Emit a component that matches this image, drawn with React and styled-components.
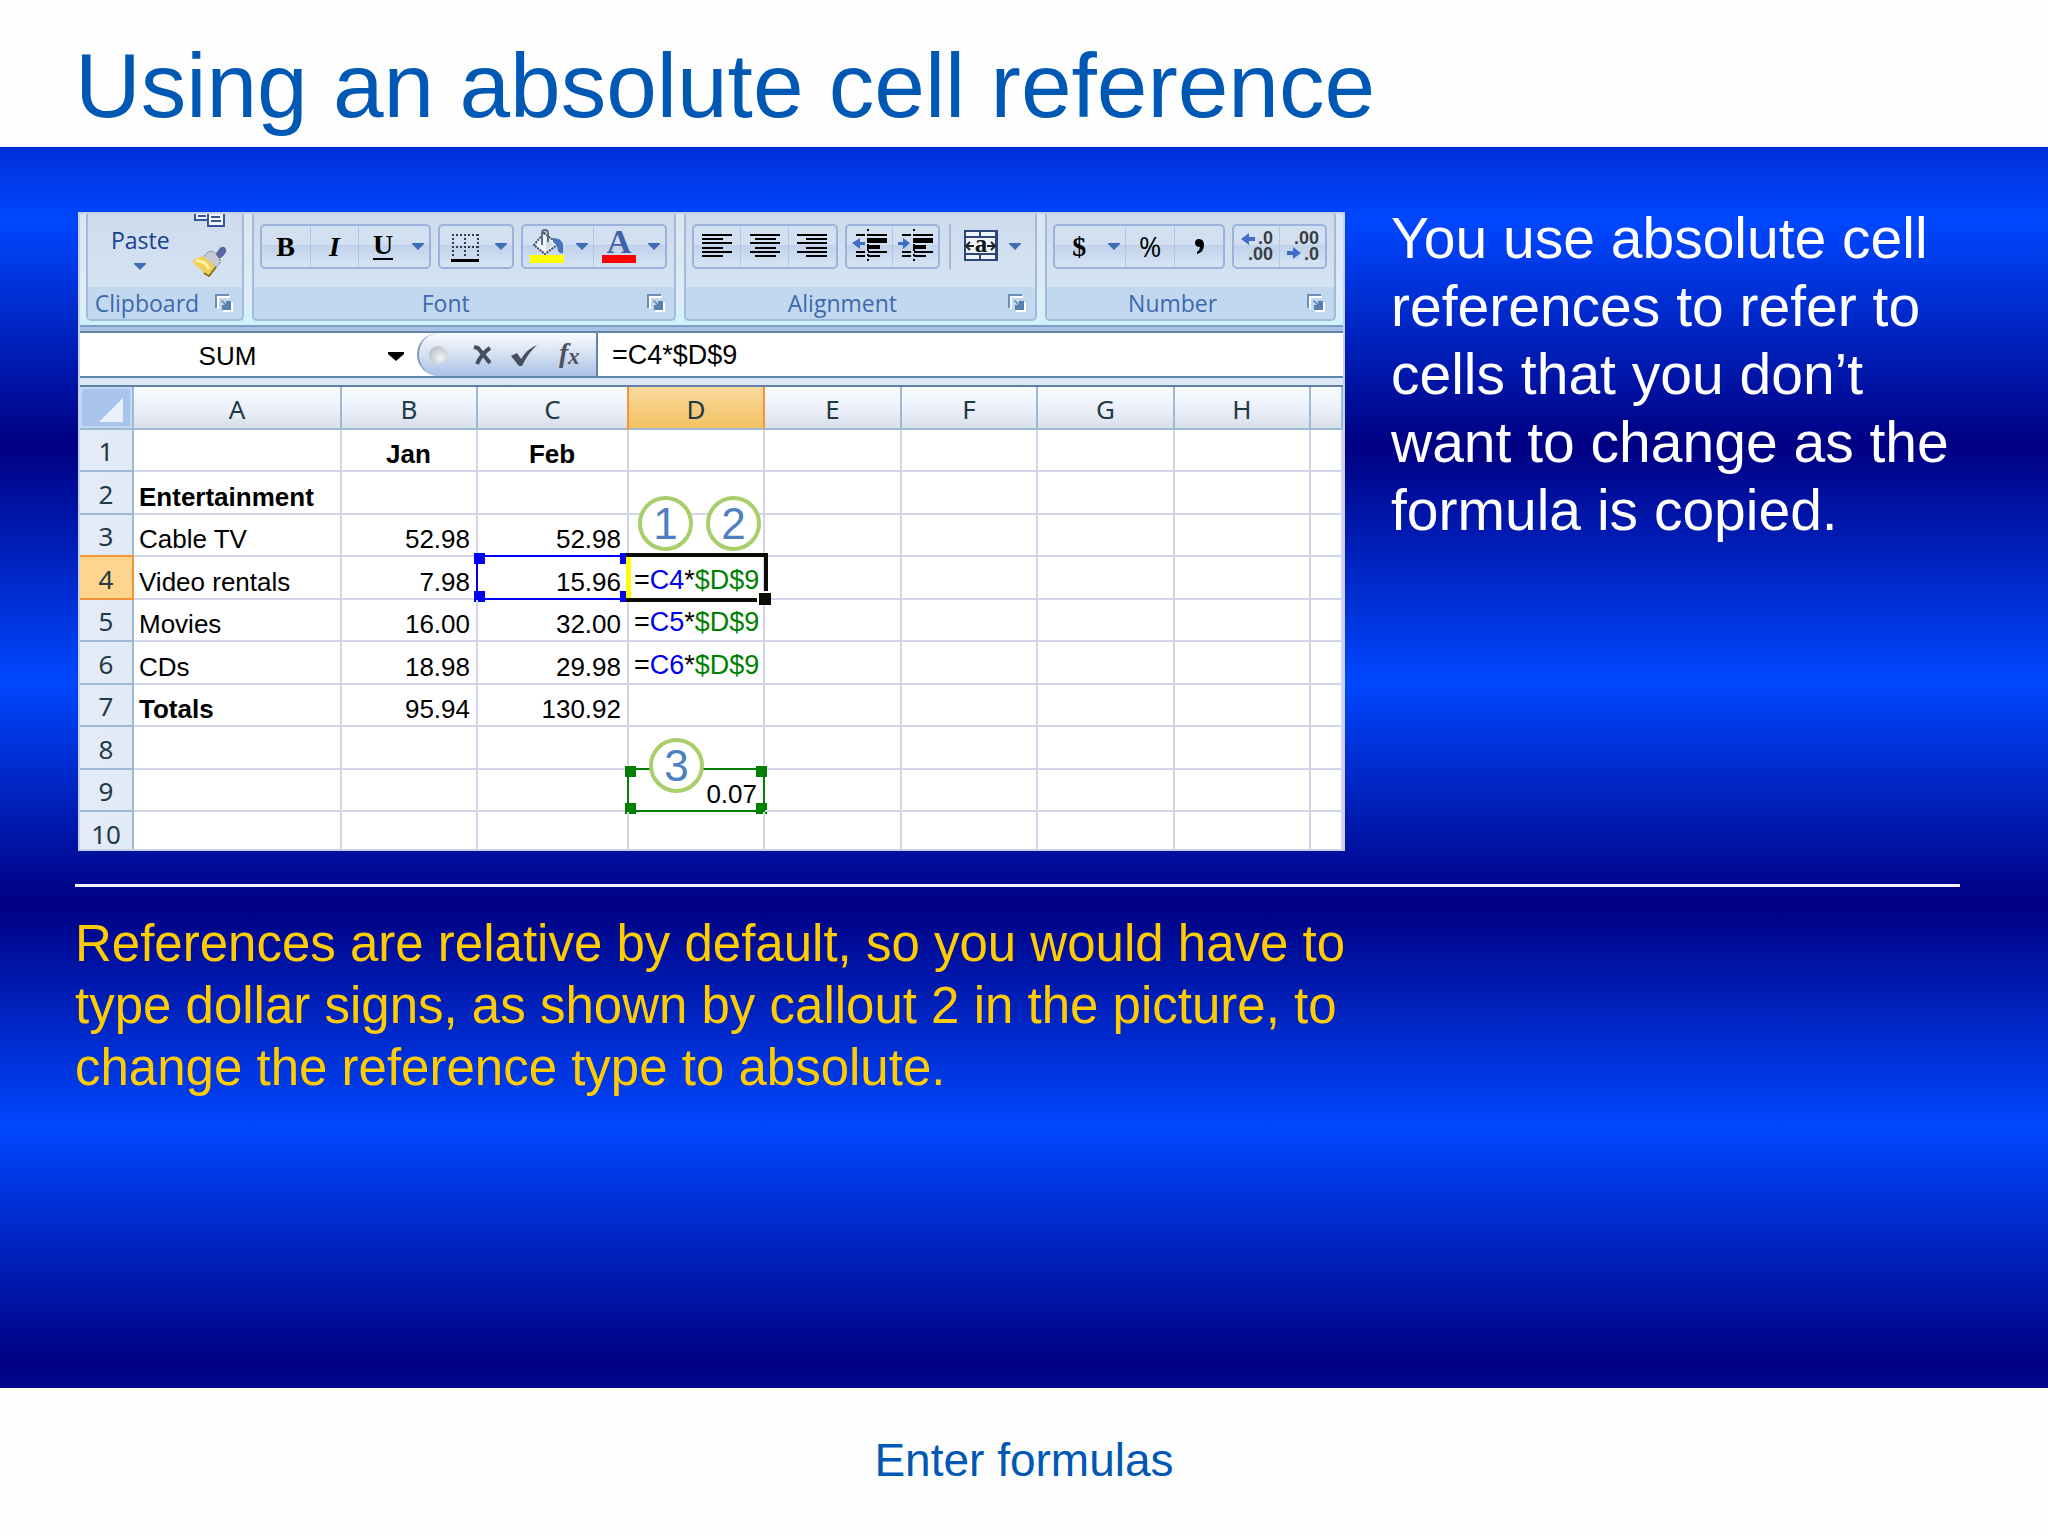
import React from 'react';
import styled, { createGlobalStyle, css } from 'styled-components';

const GlobalStyle = createGlobalStyle`
  * {
    box-sizing: border-box;
  }
  body {
    margin: 0;
    background: #fefefe;
    font-family: "Liberation Sans", Arial, sans-serif;
  }
`;

const Slide = styled.div`
  display: flex;
  flex-direction: column;
  min-height: 100vh;
`;
const Header = styled.header`
  padding: 36px 75px 11px;
`;
const Title = styled.h1`
  margin: 0;
  color: #0058b5;
  font-size: 91px;
  font-weight: 400;
  line-height: 100px;
`;
const Main = styled.main`
  flex: 1;
  padding: 57px 88px 56px 75px;
  background: linear-gradient(
    #002fd8 0%, #0047ff 6%, #000082 24%, #0047ff 43%,
    #000082 61%, #0047ff 79%, #000082 98%, #00088f 100%
  );
`;
const Columns = styled.div`
  display: grid;
  grid-template-columns: minmax(0, 1270fr) minmax(0, 569fr);
  column-gap: 46px;
  align-items: start;
`;
const Side = styled.p`
  margin: 0;
  color: #fff;
  font-size: 57px;
  line-height: 68px;
`;
const Divider = styled.hr`
  height: 3px;
  margin: 33px 0 26px;
  border: 0;
  background: #f4f4ff;
`;
const Note = styled.p`
  max-width: 1320px;
  margin: 0;
  color: #fc0;
  font-size: 51px;
  line-height: 62px;
`;
const Footer = styled.footer`
  padding: 46px 0 50px;
  color: #0058b5;
  font-size: 46px;
  line-height: 52px;
  text-align: center;
`;

/* spreadsheet window */
const Window = styled.figure`
  margin: 8px 0 0 3px;
  border: 2px solid #c5d0ea;
  background: #fff;
  overflow: hidden;
`;
const Ribbon = styled.div`
  display: flex;
  gap: 8px;
  padding: 0 7px 4px 6px;
  background: linear-gradient(#dbe5f2, #dcedf8 80%, #cdf3fb);
`;
const Group = styled.section`
  flex: ${p => p.$grow} 1 0;
  min-width: 0;
  border: 2px solid #a3badb;
  border-top: 0;
  border-radius: 0 0 5px 5px;
  background: linear-gradient(#cddbec, #d8e7f5);
  overflow: hidden;
`;
const GroupBody = styled.div`
  display: flex;
  gap: 7px;
  height: 73px;
  padding: 10px 6px 18px;
`;
const GroupFooter = styled.div`
  display: flex;
  align-items: center;
  height: 32px;
  padding-right: 8px;
  background: #c2d8ee;
`;
const GroupName = styled.span`
  flex: 1;
  color: #3f68b0;
  font: 23px/32px "Open Sans", sans-serif;
  text-align: center;
`;
const Button = styled.button`
  display: flex;
  align-items: center;
  justify-content: center;
  padding: 0;
  border: 0;
  background: none;
  color: #000;
  font: inherit;
  svg {
    overflow: visible;
  }
`;
const Launcher = styled(Button)`
  width: 20px;
  height: 24px;
  margin-left: 8px;
`;
const ToolSet = styled.div`
  display: flex;
  width: ${p => p.$width}px;
  height: 45px;
  border: 2px solid #9db3dc;
  border-radius: 5px;
  background: linear-gradient(#d3e0f1 45%, #c0d2ea 46%, #d6e4f5);
`;
const Tool = styled(Button)`
  flex: 1;
  font-family: "Liberation Serif", serif;
  font-size: 28px;
  font-weight: 700;
  font-style: ${p => (p.$italic ? 'italic' : 'normal')};
  & + & {
    border-left: 1px solid #b3c6e2;
  }
`;
const ArrowButton = styled(Button)`
  width: 22px;
  & + button {
    border-left: 1px solid #b3c6e2;
  }
`;
const Underlined = styled.span`
  padding: 0 0 1px;
  border-bottom: 2px solid #000;
  line-height: 24px;
`;
const Percent = styled.span`
  font: 27px "Open Sans", sans-serif;
`;
const Merge = styled.div`
  display: flex;
  align-items: center;
  margin-left: 2px;
  padding-left: 10px;
  gap: 3px;
  border-left: 2px solid #a3badb;
`;
const PasteBody = styled(GroupBody)`
  justify-content: space-between;
  padding: 0 15px 0 23px;
`;
const PasteButton = styled(Button)`
  flex-direction: column;
  justify-content: flex-start;
  gap: 9px;
  padding-top: 12px;
  color: #17408f;
  font: 23px/28px "Open Sans", sans-serif;
`;
const ClipTools = styled.div`
  display: flex;
  flex-direction: column;
  gap: 18px;
`;

const Band = styled.div`
  height: 8px;
  border-top: 2px solid #7f9dc3;
  border-bottom: 2px solid #5f86ac;
  background: #a9c1e2;
`;
const FormulaBar = styled.div`
  display: flex;
  height: 43px;
  background: #fff;
`;
const NameBox = styled.input`
  width: 295px;
  padding: 4px 0 0;
  border: 0;
  outline: 0;
  background: none;
  color: #000;
  font: 26px "Liberation Sans", Arial, sans-serif;
  text-align: center;
`;
const NameArrow = styled(Button)`
  width: 42px;
  padding-top: 3px;
`;
const Actions = styled.div`
  display: flex;
  align-items: center;
  gap: 17px;
  width: 181px;
  padding-left: 10px;
  border-left: 2px solid #8297c4;
  border-right: 2px solid #5f86ac;
  border-radius: 22px 0 0 22px;
  background: linear-gradient(#fafcff, #d5e0f0 50%, #a8c1e6);
`;
const Knob = styled.span`
  width: 18px;
  height: 18px;
  margin-right: 7px;
  border-radius: 50%;
  background: radial-gradient(circle at 65% 65%, #f4f4f6, #a9adb8);
`;
const Formula = styled.input`
  flex: 1;
  min-width: 0;
  padding: 2px 14px 0;
  border: 0;
  outline: 0;
  color: #000;
  font: 27px "Liberation Sans", Arial, sans-serif;
`;
const Strip = styled.div`
  height: 11px;
  border-top: 2px solid #5f86ac;
  border-bottom: 2px solid #5f7fa6;
  background: #dce8f5;
`;

const Sheet = styled.table`
  width: 100%;
  border-spacing: 0;
  table-layout: fixed;
  font-size: 26px;
  line-height: 30px;
`;
const Row = styled.tr`
  height: 42px;
  &:nth-child(even) {
    height: 43px;
  }
  &:last-child {
    height: 37px;
  }
  &:last-child > * {
    padding-bottom: 0;
    border-bottom: 0;
  }
`;
const HeadRow = styled.tr`
  height: 43px;
`;
const heading = css`
  padding: 0 0 4px;
  border-right: 2px solid #9eb9d3;
  border-bottom: 2px solid #9eb9d3;
  color: #1f3b46;
  font-family: "Noto Sans", sans-serif;
  font-weight: 400;
  vertical-align: bottom;
`;
const ColHead = styled.th`
  ${heading}
  background: linear-gradient(#f8fdff, #eceffa 55%, #d7dfe9);
  ${p => p.$active && css`
    border-right-color: #f29536;
    background: linear-gradient(#f9d99f, #f2c160);
    box-shadow: -2px 0 #f29536;
  `}
`;
const RowHead = styled.th`
  ${heading}
  background: linear-gradient(90deg, #e6ebf8, #e0eaf5);
  ${p => p.$active && css`
    border-color: #f29536;
    background: #ffd58d;
    box-shadow: 0 -2px #f29536;
  `}
`;
const Corner = styled.td`
  padding: 0 9px 6px 0;
  border: 2px solid #9eb9d3;
  border-width: 0 2px 2px 0;
  background: #a9c4ea;
  box-shadow: inset 0 0 0 2px #c3d8f3;
  text-align: right;
  vertical-align: bottom;
  line-height: 0;
`;
const Cell = styled.td`
  position: relative;
  padding: 0 6px 1px 5px;
  border-right: 2px solid #d3d6e8;
  border-bottom: 2px solid #d3d6e8;
  font-weight: ${p => (p.$bold ? 700 : 400)};
  text-align: ${p => p.$align || 'left'};
  vertical-align: bottom;
  white-space: nowrap;
  ${p => p.$formula && css`
    padding-bottom: 3px;
    font-size: 27px;
  `}
`;
const Ref = styled.span`
  color: ${p => p.$color};
`;
const RangeBox = styled.span`
  position: absolute;
  inset: -2px;
  border: 2px solid ${p => p.$color};
`;
const Handle = styled.span`
  position: absolute;
  width: 11px;
  height: 11px;
  background: ${p => p.$color};
  ${p => p.$y}: -4px;
  ${p => p.$x}: -4px;
`;
const ActiveBox = styled.span`
  position: absolute;
  z-index: 1;
  inset: -4px -5px -4px -3px;
  border: 4px solid #0c0c04;
  border-left: 0;
  box-shadow: inset 5px 0 #ff0;
  &::after {
    content: '';
    position: absolute;
    right: -7px;
    bottom: -7px;
    width: 12px;
    height: 12px;
    border: solid #fff;
    border-width: 2px 0 0 2px;
    background: #0c0c04;
  }
`;
const Callout = styled.span`
  position: absolute;
  z-index: 2;
  top: ${p => p.$top}px;
  left: ${p => p.$left}px;
  width: 55px;
  height: 55px;
  border: 4px solid #a9cf6d;
  border-radius: 50%;
  background: #fff;
  color: #4d80c3;
  font-size: 44px;
  line-height: 47px;
  text-align: center;
`;

const Arrow = ({ color = '#3d6db5' }) => (
  <svg width="12" height="7" viewBox="0 0 12 7" aria-hidden="true">
    <path d="M0 0h12v1L6 7 0 1z" fill={color} />
  </svg>
);

const Icon = ({ children }) => (
  <svg width="40" height="41" viewBox="0 0 40 41" aria-hidden="true">{children}</svg>
);

const LauncherIcon = () => (
  <svg width="18" height="18" viewBox="0 0 18 18" aria-hidden="true">
    <path d="M3 15V3h12" fill="none" stroke="#fff" strokeWidth="2" />
    <path d="M1 14V1h13" fill="none" stroke="#6c8ebb" strokeWidth="2" />
    <path d="M17 8v9H8" fill="none" stroke="#fff" strokeWidth="2" />
    <path d="M7 6l4 4V7h5v9H7v-5h3L6 7z" fill="#5a80b0" />
  </svg>
);

const BordersIcon = () => (
  <Icon>
    <g stroke="#333c50" strokeWidth="2" strokeDasharray="2 2" fill="none">
      <path d="M7 9h27M7 21h27M8 8v24M20 8v24M33 8v24" />
    </g>
    <path d="M6 33h28v3H6z" fill="#000" />
  </Icon>
);

const FillIcon = () => (
  <Icon>
    <path d="M17 7L31 18 18 28 7 19z" fill="#f3f6fb" stroke="#3b4c6e" strokeWidth="2" strokeDasharray="2 1" />
    <path d="M19 12l8 6-8 7z" fill="#d3dcea" />
    <path d="M15 19V7q0-3 3-3t3 3v9" fill="none" stroke="#5c6b88" strokeWidth="2" />
    <path d="M26 12q8 0 10 6v9q-3 1-5-2 0-6-5-9z" fill="#4673bd" />
    <path d="M3 29h34v8H3z" fill="#ff0" />
  </Icon>
);

const FontColorIcon = () => (
  <Icon>
    <text x="20" y="27" textAnchor="middle" fontFamily="Liberation Serif, serif" fontWeight="700" fontSize="34" fill="#3d62a8">A</text>
    <path d="M3 29h34v8H3z" fill="#f00" />
  </Icon>
);

const ALIGN_X = { left: 5, center: 10, right: 14 };

const AlignIcon = ({ side }) => (
  <Icon>
    {[8, 12, 16, 21, 25, 29].map((y, i) => (
      <rect key={y} x={i % 2 ? ALIGN_X[side] : 5} y={y} width={i % 2 ? 21 : 30} height="2" fill="#000" />
    ))}
  </Icon>
);

const IndentIcon = ({ increase }) => (
  <Icon>
    <path d="M7 8h9v2H7zM7 25h9v2H7zM7 29h9v2H7zM19 8h19v2H19zM18 12h20v5H18zM18 19h13v4H18zM19 25h19v2H19zM19 29h12v2H19z" fill="#000" />
    <path d="M19 3v34" stroke="#000" strokeWidth="2" strokeDasharray="2 3" />
    {increase
      ? <path d="M3 16h5v-4l7 5-7 6v-4H3z" fill="#3f6cc4" />
      : <path d="M16 16h-5v-4l-8 5 8 6v-4h5z" fill="#3f6cc4" />}
  </Icon>
);

const MergeIcon = () => (
  <Icon>
    <path d="M3 4h34v31H3z" fill="#2d4679" />
    <path d="M5 6h13v4H5zM20 6h14v4H20zM5 12h29v15H5zM5 29h13v4H5zM20 29h14v4H20z" fill="#eef3fb" />
    <path d="M4 20h9M26 20h9M9 16l-4 4 4 4M30 16l4 4-4 4" fill="none" stroke="#222" strokeWidth="2" />
    <text x="20" y="26" textAnchor="middle" fontFamily="Liberation Serif, serif" fontWeight="700" fontSize="25" fill="#111">a</text>
  </Icon>
);

const DecimalIcon = ({ increase }) => (
  <Icon>
    <g fontFamily="Liberation Sans, sans-serif" fontWeight="700" fontSize="18" fill="#3a3d45" textAnchor="end">
      <text x="36" y="18">{increase ? '.0' : '.00'}</text>
      <text x="36" y="34">{increase ? '.00' : '.0'}</text>
    </g>
    {increase
      ? <path d="M18 11h-6V7l-8 6 8 6v-4h6z" fill="#3f6cc4" />
      : <path d="M4 25h6v-4l8 6-8 6v-4H4z" fill="#3f6cc4" />}
  </Icon>
);

const CopyIcon = () => (
  <svg width="32" height="14" viewBox="0 0 32 14" aria-hidden="true">
    <path d="M1 0h12v6H1z" fill="#f3f7fd" />
    <path d="M1 0v6h12M4 2h8" fill="none" stroke="#34569b" strokeWidth="2" />
    <path d="M14 0h16v12H14z" fill="#f3f7fd" />
    <path d="M14 0v12h16V0M17 3h9M17 7h10" fill="none" stroke="#34569b" strokeWidth="2" />
  </svg>
);

const BrushIcon = () => (
  <svg width="34" height="32" viewBox="0 0 34 32" aria-hidden="true">
    <path d="M21 10l6-8q4-3 6 1 1 4-3 7l-6 5z" fill="#5a629f" />
    <path d="M13 8q5-5 9-1l5 6q1 5-4 8L10 11z" fill="#c9cbd3" stroke="#6e6e78" strokeDasharray="2 1" />
    <path d="M10 10l13 11-7 9-5-3-4-4-7-6 1-4z" fill="#f2cf58" />
    <path d="M3 14l9 3 4 6" fill="none" stroke="#fff2a8" strokeWidth="3" />
    <path d="M23 21l-7 9-5-3" fill="none" stroke="#8a6d25" strokeWidth="2" />
  </svg>
);

const RibbonGroup = ({ name, grow, children }) => (
  <Group $grow={grow} aria-label={name}>
    {children}
    <GroupFooter>
      <GroupName>{name}</GroupName>
      <Launcher aria-label={`${name} options`}><LauncherIcon /></Launcher>
    </GroupFooter>
  </Group>
);

const Drop = ({ label }) => <ArrowButton aria-label={label}><Arrow /></ArrowButton>;

const COLUMNS = [
  ['A', 208], ['B', 136], ['C', 151], ['D', 136], ['E', 137], ['F', 136], ['G', 137], ['H', 136],
];
const ROWS = [
  ['', 'Jan', 'Feb'],
  ['Entertainment'],
  ['Cable TV', '52.98', '52.98'],
  ['Video rentals', '7.98', '15.96', 'C4'],
  ['Movies', '16.00', '32.00', 'C5'],
  ['CDs', '18.98', '29.98', 'C6'],
  ['Totals', '95.94', '130.92'],
  [],
  ['', '', '', '0.07'],
  [],
];
const BOLD = ['Jan', 'Feb', 'Entertainment', 'Totals'];

const Handles = ({ color }) => (
  <>
    <Handle $color={color} $x="left" $y="top" />
    <Handle $color={color} $x="right" $y="top" />
    <Handle $color={color} $x="left" $y="bottom" />
    <Handle $color={color} $x="right" $y="bottom" />
  </>
);

// range outlines and numbered callouts, by cell
const OVERLAYS = {
  D3: <><Callout $left={9} $top={-19}>1</Callout><Callout $left={77} $top={-19}>2</Callout></>,
  C4: <RangeBox $color="#0000f5"><Handles color="#0000f5" /></RangeBox>,
  D4: <ActiveBox />,
  D9: <><RangeBox $color="#008000"><Handles color="#008000" /></RangeBox><Callout $left={20} $top={-32}>3</Callout></>,
};

function SheetCell ({ id, value }) {
  const formula = /^C\d$/.test(value);
  let align = 'left';
  if (value === 'Jan' || value === 'Feb') align = 'center';
  else if (/^\d/.test(value)) align = 'right';
  return (
    <Cell $bold={BOLD.includes(value)} $align={align} $formula={formula}>
      {formula
        ? <>=<Ref $color="#0000f0">{value}</Ref>*<Ref $color="#008000">$D$9</Ref></>
        : value}
      {OVERLAYS[id]}
    </Cell>
  );
}

function Spreadsheet () {
  return (
    <Sheet>
      <colgroup>
        <col width="54" />
        {COLUMNS.map(([name, width]) => <col key={name} width={width} />)}
        <col />
      </colgroup>
      <thead>
        <HeadRow>
          <Corner>
            <svg width="24" height="24" viewBox="0 0 24 24" aria-hidden="true">
              <path d="M24 0v24H0z" fill="#e9f0f9" />
            </svg>
          </Corner>
          {COLUMNS.map(([name]) => <ColHead key={name} scope="col" $active={name === 'D'}>{name}</ColHead>)}
          <ColHead />
        </HeadRow>
      </thead>
      <tbody>
        {ROWS.map((row, i) => (
          <Row key={i}>
            <RowHead scope="row" $active={i === 3}>{i + 1}</RowHead>
            {COLUMNS.map(([name], j) => (
              <SheetCell key={name} id={`${name}${i + 1}`} value={row[j] || ''} />
            ))}
            <Cell />
          </Row>
        ))}
      </tbody>
    </Sheet>
  );
}

function Toolbar () {
  return (
    <Ribbon>
      <RibbonGroup name="Clipboard" grow={154}>
        <PasteBody>
          <PasteButton>Paste<Arrow /></PasteButton>
          <ClipTools>
            <Button aria-label="Copy"><CopyIcon /></Button>
            <Button aria-label="Format painter"><BrushIcon /></Button>
          </ClipTools>
        </PasteBody>
      </RibbonGroup>
      <RibbonGroup name="Font" grow={420}>
        <GroupBody>
          <ToolSet $width={171}>
            <Tool>B</Tool>
            <Tool $italic>I</Tool>
            <Tool><Underlined>U</Underlined></Tool>
            <Drop label="Underline style" />
          </ToolSet>
          <ToolSet $width={76}>
            <Tool aria-label="Borders"><BordersIcon /></Tool>
            <Drop label="Border style" />
          </ToolSet>
          <ToolSet $width={146}>
            <Tool aria-label="Fill color"><FillIcon /></Tool>
            <Drop label="More fill colors" />
            <Tool aria-label="Font color"><FontColorIcon /></Tool>
            <Drop label="More font colors" />
          </ToolSet>
        </GroupBody>
      </RibbonGroup>
      <RibbonGroup name="Alignment" grow={350}>
        <GroupBody>
          <ToolSet $width={146}>
            <Tool aria-label="Align left"><AlignIcon side="left" /></Tool>
            <Tool aria-label="Center"><AlignIcon side="center" /></Tool>
            <Tool aria-label="Align right"><AlignIcon side="right" /></Tool>
          </ToolSet>
          <ToolSet $width={95}>
            <Tool aria-label="Decrease indent"><IndentIcon /></Tool>
            <Tool aria-label="Increase indent"><IndentIcon increase /></Tool>
          </ToolSet>
          <Merge>
            <Button aria-label="Merge and center"><MergeIcon /></Button>
            <Drop label="Merge options" />
          </Merge>
        </GroupBody>
      </RibbonGroup>
      <RibbonGroup name="Number" grow={287}>
        <GroupBody>
          <ToolSet $width={172}>
            <Tool>$</Tool>
            <Drop label="Currency" />
            <Tool><Percent>%</Percent></Tool>
            <Tool aria-label="Comma style">
              <Icon><path d="M16 17q0-4 4-4 5 0 5 6 0 7-7 9v-2q3-2 3-5-5 0-5-4z" fill="#000" /></Icon>
            </Tool>
          </ToolSet>
          <ToolSet $width={95}>
            <Tool aria-label="Increase decimal"><DecimalIcon increase /></Tool>
            <Tool aria-label="Decrease decimal"><DecimalIcon /></Tool>
          </ToolSet>
        </GroupBody>
      </RibbonGroup>
    </Ribbon>
  );
}

function FormulaRow () {
  return (
    <FormulaBar>
      <NameBox aria-label="Name box" defaultValue="SUM" />
      <NameArrow aria-label="Named ranges">
        <svg width="16" height="9" viewBox="0 0 16 9" aria-hidden="true">
          <path d="M0 0h16v2L8 9 0 2z" fill="#000" />
        </svg>
      </NameArrow>
      <Actions>
        <Knob />
        <Button aria-label="Cancel">
          <svg width="22" height="22" viewBox="0 0 22 22" aria-hidden="true">
            <path d="M3 3l4 1 12 15M19 4q-8 5-13 16" fill="none" stroke="#454f5e" strokeWidth="4" />
          </svg>
        </Button>
        <Button aria-label="Enter">
          <svg width="28" height="22" viewBox="0 0 28 22" aria-hidden="true">
            <path d="M1 12l6-3 4 6Q17 5 27 1 18 9 12 22h-3z" fill="#454f5e" />
          </svg>
        </Button>
        <Button aria-label="Insert function">
          <svg width="28" height="28" viewBox="0 0 28 28" aria-hidden="true">
            <text x="4" y="21" fontFamily="Liberation Serif, serif" fontStyle="italic" fontWeight="700" fontSize="28" fill="#4a5361">f</text>
            <text x="13" y="23" fontFamily="Liberation Serif, serif" fontStyle="italic" fontWeight="700" fontSize="23" fill="#4a5361">x</text>
          </svg>
        </Button>
      </Actions>
      <Formula aria-label="Formula" defaultValue="=C4*$D$9" />
    </FormulaBar>
  );
}

export default function App () {
  return (
    <Slide>
      <GlobalStyle />
      <Header>
        <Title>Using an absolute cell reference</Title>
      </Header>
      <Main>
        <Columns>
          <Window>
            <Toolbar />
            <Band />
            <FormulaRow />
            <Strip />
            <Spreadsheet />
          </Window>
          <Side>You use absolute cell references to refer to cells that you don’t want to change as the formula is copied.</Side>
        </Columns>
        <Divider />
        <Note>
          References are relative by default, so you would have to type dollar signs, as shown by
          callout 2 in the picture, to change the reference type to absolute.
        </Note>
      </Main>
      <Footer>Enter formulas</Footer>
    </Slide>
  );
}
